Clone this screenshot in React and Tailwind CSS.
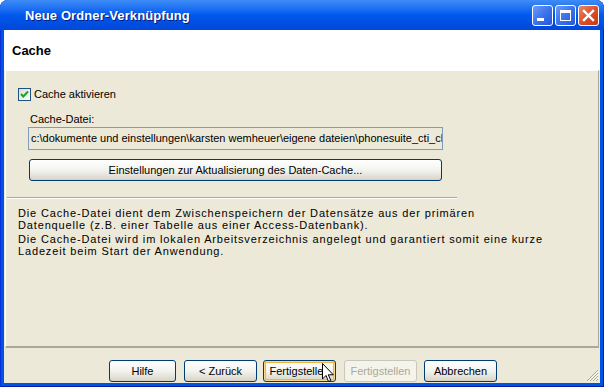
import React from "react";

const F = { fontFamily: "Tahoma, 'Liberation Sans', Arial, sans-serif" };

function XPButton({ children, className = "", focused = false, disabled = false }) {
  if (disabled) {
    return (
      <div className={`h-[22px] rounded-[3px] border border-[#c9c7ba] bg-[#f5f4ea] text-[#aca899] flex items-center justify-center text-[11px] ${className}`}>
        {children}
      </div>
    );
  }
  return (
    <div className={`h-[22px] rounded-[3px] border border-[#003c74] bg-gradient-to-b from-[#ffffff] via-[#f3f3ef] to-[#d8d4c8] text-black flex items-center justify-center text-[11px] ${focused ? "shadow-[inset_0_0_0_1px_#fbd887,inset_0_0_0_2px_#f5b33b]" : "shadow-[inset_0_-1px_0_#d6d0c5]"} ${className}`}>
      {children}
    </div>
  );
}

function TitleBtn({ children, close = false }) {
  return (
    <div
      className={`w-[21px] h-[21px] rounded-[3px] border border-white flex items-center justify-center ${
        close
          ? "bg-gradient-to-br from-[#e8866a] via-[#dd4f2a] to-[#c23a17]"
          : "bg-gradient-to-br from-[#6e9cf7] via-[#3b74ec] to-[#2455d8]"
      }`}
    >
      {children}
    </div>
  );
}

export default function App() {
  return (
    <div className="w-[604px] h-[387px] relative overflow-hidden bg-white" style={F}>
      <div className="flex flex-col h-full rounded-t-[8px] bg-[#0054e3] shadow-[inset_-1px_0_0_#001ea0,inset_1px_0_0_#0831d9,inset_0_-1px_0_#001ea0]">
        {/* Title bar */}
        <div className="h-[30px] flex items-center pl-[25px] pr-[5px] rounded-t-[8px] bg-gradient-to-b from-[#3d8cf6] via-[#0058ee] to-[#0047d8]">
          <div
            className="text-white font-bold text-[13px] tracking-[0.1px] mt-[2px] [text-shadow:1px_1px_0_#0a1882]"
            style={{ fontFamily: "'Trebuchet MS', 'Liberation Sans', Arial, sans-serif" }}
          >
            Neue Ordner-Verknüpfung
          </div>
          <div className="ml-auto flex gap-[2px] mt-[1px]">
            <TitleBtn>
              <div className="w-[7px] h-[3px] bg-white mt-[8px] -ml-[4px]" />
            </TitleBtn>
            <TitleBtn>
              <div className="w-[11px] h-[11px] border border-white border-t-[3px]" />
            </TitleBtn>
            <TitleBtn close>
              <svg width="13" height="13" viewBox="0 0 13 13">
                <path d="M2 2 L11 11 M11 2 L2 11" stroke="white" strokeWidth="2.4" strokeLinecap="square" />
              </svg>
            </TitleBtn>
          </div>
        </div>

        {/* Client */}
        <div className="flex-1 flex flex-col mx-[4px] mb-[4px] bg-[#ece9d8] relative">
          {/* Header */}
          <div className="h-[40px] bg-white flex items-center pl-[8px]">
            <span className="font-bold text-[13px] text-black mt-[1px]">Cache</span>
          </div>

          {/* Panel */}
          <div className="h-[278px] mx-[1px] border-l border-t border-white border-r border-r-[#aca899] border-b-2 border-b-[#aca899] flex flex-col text-[11px] text-black">
            <div className="mt-[17px] ml-[12px] flex items-center h-[13px]">
              <div className="w-[13px] h-[13px] border border-[#1c5180] bg-gradient-to-br from-[#dcdcd7] to-white flex items-center justify-center">
                <svg width="9" height="9" viewBox="0 0 9 9">
                  <path d="M1 4 L3.3 6.5 L8 1.5" stroke="#21a121" strokeWidth="2" fill="none" />
                </svg>
              </div>
              <span className="ml-[3px] leading-[13px]">Cache aktivieren</span>
            </div>

            <div className="mt-[12px] ml-[24px] leading-[13px]">Cache-Datei:</div>

            <div className="mt-[1px] ml-[22px] w-[415px] h-[23px] border border-[#7f9db9] bg-[#ece9d8] flex items-center pl-[2px] overflow-hidden whitespace-nowrap">
              c:\dokumente und einstellungen\karsten wemheuer\eigene dateien\phonesuite_cti_cl
            </div>

            <XPButton className="mt-[9px] ml-[23px] w-[413px]">
              Einstellungen zur Aktualisierung des Daten-Cache...
            </XPButton>

            <div className="mt-[16px] ml-[1px] w-[450px] border-t border-[#aca899] border-b border-b-white" />

            <div className="mt-[8px] ml-[12px] leading-[12px] w-[570px] tracking-[0.85px] whitespace-nowrap">
              <p>
                Die Cache-Datei dient dem Zwischenspeichern der Datensätze aus der primären
                <br />
                Datenquelle (z.B. einer Tabelle aus einer Access-Datenbank).
              </p>
              <p className="mt-[2px]">
                Die Cache-Datei wird im lokalen Arbeitsverzeichnis angelegt und garantiert somit eine kurze
                <br />
                Ladezeit beim Start der Anwendung.
              </p>
            </div>
          </div>

          {/* Footer */}
          <div className="flex-1 flex items-start pt-[12px] text-[11px]">
            <XPButton className="ml-[105px] w-[67px]">Hilfe</XPButton>
            <XPButton className="ml-[8px] w-[73px]">&lt; Zurück</XPButton>
            <XPButton className="ml-[6px] w-[73px]" focused>Fertigstellen</XPButton>
            <XPButton className="ml-[8px] w-[73px]" disabled>Fertigstellen</XPButton>
            <XPButton className="ml-[7px] w-[73px]">Abbrechen</XPButton>
          </div>

          {/* Resize grip */}
          <svg className="absolute right-[1px] bottom-[1px]" width="13" height="13" viewBox="0 0 13 13">
            <path d="M12 1 L1 12 M12 4 L4 12 M12 7 L7 12 M12 10 L10 12" stroke="#aca899" strokeWidth="1" />
            <path d="M12.5 2 L2 12.5 M12.5 5 L5 12.5 M12.5 8 L8 12.5" stroke="#ffffff" strokeWidth="1" opacity="0.8" />
          </svg>
        </div>
      </div>

      {/* Mouse cursor */}
      <svg className="absolute left-[322px] top-[363px]" width="13" height="21" viewBox="0 0 13 21">
        <path d="M0.5 0.5 L0.5 16 L4 12.5 L6.5 18.5 L8.8 17.5 L6.3 11.8 L11.3 11.8 Z" fill="white" stroke="black" strokeWidth="1" />
      </svg>
    </div>
  );
}
